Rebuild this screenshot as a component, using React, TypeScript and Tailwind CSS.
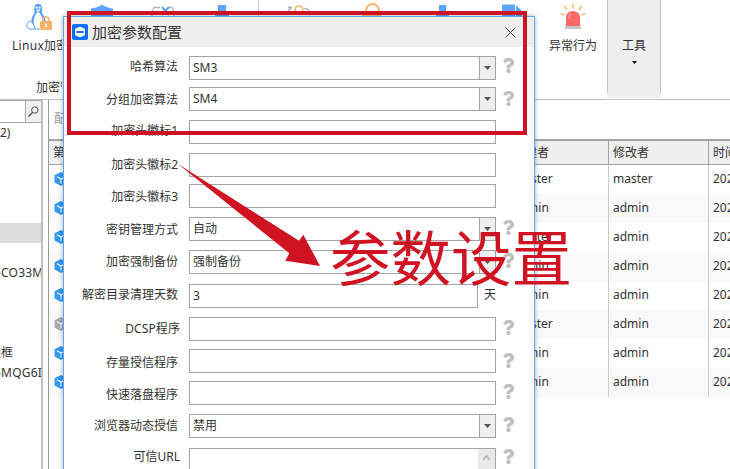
import { FaQuestion } from "react-icons/fa";

type Field = {
  label: string;
  value?: string;
  select?: boolean;
  help?: boolean;
  unit?: string;
  scroll?: boolean;
  row: string;
  text: string;
  mark?: string;
};

// row: 与上一行的间距, text: 标签的微调, mark: 问号的垂直微调
const FIELDS: Field[] = [
  { label: "哈希算法", value: "SM3", select: true, help: true, row: "mt-[9px]", text: "mt-[2px] pr-px", mark: "mt-[2px]" },
  { label: "分组加密算法", value: "SM4", select: true, help: true, row: "mt-[7px]", text: "mt-[4px] pr-px", mark: "mt-[4px]" },
  { label: "加密头徽标1", row: "mt-[9px]", text: "mt-[2px] pr-px" },
  { label: "加密头徽标2", row: "mt-[9px]", text: "mt-[3px] pr-px" },
  { label: "加密头徽标3", row: "mt-[7px]", text: "mt-[4px] pr-px" },
  { label: "密钥管理方式", value: "自动", select: true, help: true, row: "mt-[9px]", text: "mt-[4px] pr-px", mark: "mt-[3px]" },
  { label: "加密强制备份", value: "强制备份", select: true, help: true, row: "mt-[9px]", text: "mt-[3px] pr-px", mark: "mt-[3px]" },
  { label: "解密目录清理天数", value: "3", unit: "天", row: "mt-[10px]", text: "mt-[2px] pr-px" },
  { label: "DCSP程序", help: true, row: "mt-[9px]", text: "mt-[3px] -mr-px tracking-[0.1px]", mark: "mt-[3px]" },
  { label: "存量授信程序", help: true, row: "mt-[8px]", text: "mt-[5px] pr-px", mark: "mt-[4px]" },
  { label: "快速落盘程序", help: true, row: "mt-[8px]", text: "mt-[5px] pr-px", mark: "mt-[3px]" },
  { label: "浏览器动态授信", value: "禁用", select: true, help: true, row: "mt-[9px]", text: "mt-[3px] pr-px", mark: "mt-[3px]" },
  { label: "可信URL", help: true, scroll: true, row: "mt-[10px]", text: "mt-0 -mr-px", mark: "mt-px" },
];

const ROWS = [
  { creator: "master", editor: "master", active: true },
  { creator: "admin", editor: "admin", active: true },
  { creator: "master", editor: "admin", active: true },
  { creator: "admin", editor: "admin", active: true },
  { creator: "admin", editor: "admin", active: true },
  { creator: "master", editor: "admin", active: false },
  { creator: "admin", editor: "admin", active: true },
  { creator: "admin", editor: "admin", active: true },
];

function CubeIcon({ active }: { active: boolean }) {
  return (
    <svg width="14" height="14" viewBox="0 0 14 14" className="shrink-0">
      <path d="M7 0 13.5 3.3v7.2L7 14 .5 10.5V3.3Z" fill={active ? "#3399f3" : "#a9a9b1"} />
      <path d="M3 4.8 7 7l4-2.200M7 7v4.500" stroke="#fff" strokeWidth="1.100" fill="none" />
    </svg>
  );
}

function LinuxIcon() {
  return (
    <svg width="28" height="30" viewBox="0 0 28 30" className="shrink-0">
      <path d="M8.500 10C7.500 4 9 .8 12.200.8S17 4 16 10c3 4 4.500 7 3 12H6c-1.500-5 0-8 2.500-12Z" fill="#5ba4fb" />
      <path d="M12 8.500c-3 3-5 8-4 14.500h8.500c1.500-5.500-1-11.500-4.500-14.500Z" fill="#fff" />
      <path d="M3.500 17c-.5 2.500-3.500 3-2.500 7.500 1.500 1.500 5 2.500 7.500 1.500 1.500-2.500-2-5.500-5-9Z" fill="#fff" stroke="#5ba4fb" strokeWidth="1" />
      <path d="M8.500 26h6" stroke="#5ba4fb" strokeWidth="1" />
      <circle cx="10.600" cy="4.700" r="1.100" fill="#fff" />
      <circle cx="13.700" cy="4.700" r="1.100" fill="#fff" />
      <path d="m10 7.300 2.200-1 2.200 1-2.200 1.400Z" fill="#fff" />
      <path d="M17 18v-1a3 3 0 0 1 6 0v1" fill="none" stroke="#fab26b" strokeWidth="1.500" />
      <rect x="14" y="18" width="12" height="9" rx="1" fill="#fab26b" />
      <path d="M20 20.500V24" stroke="#fff" strokeWidth="1.500" />
    </svg>
  );
}

function AlarmIcon() {
  return (
    <svg width="26" height="26" viewBox="0 0 26 26">
      <path d="M13 0v4.500M4.500 2l2.500 4M21.500 2 19 6M.500 9.500l4 1.500M25.500 9.500l-4 1.500" stroke="#ffbc70" strokeWidth="1.600" />
      <path d="M6 22v-9a7 6 0 0 1 14 0v9Z" fill="#ff6868" />
      <path d="M9 15v-2q0-2 2-3" stroke="#ffc4c4" strokeWidth="1" fill="none" />
      <rect x="5" y="22" width="16" height="3" rx=".5" fill="#c4c4c4" />
    </svg>
  );
}

// 工具栏上被对话框挡住、只露出顶部的图标
function RibbonIcons() {
  return (
    <svg width="460" height="17" viewBox="0 0 460 17" className="shrink-0">
      <path d="M29 17V8.500q7-1 11-4 4 3 11 4V17Z" fill="#5ba5fb" />
      <path d="M98 7.500h-5.500q-2 0-2.500 9M106 7.500h3.500q2 0 2.500 9" stroke="#b8b8b8" strokeWidth="1.500" fill="none" />
      <path d="m100 7 7 8m0-8-7 8" stroke="#5ba5fb" strokeWidth="2" />
      <path d="M156 5h8v10h3v2h-14v-2h3Z" fill="#5ba5fb" />
      <path d="M196.500 1v16" stroke="#c9c9c9" />
      <path d="M225.500 15q.5-6 4-6.500M242 8.500q6-.5 6 7" stroke="#b8b8b8" strokeWidth="1.500" fill="none" />
      <path d="M226 7.500h4" stroke="#b8b8b8" strokeWidth="2" />
      <path d="M233 15v-5a4 4 0 0 1 8 0v5" stroke="#fbb877" strokeWidth="1.700" fill="none" />
      <path d="M304 14v-3a6.500 7 0 0 1 13 0v3M300 15.500h20" stroke="#fbb877" strokeWidth="2" fill="none" />
      <path d="M377 5h7v10h3v2h-13v-2h3Z" fill="#5ba5fb" />
      <path d="M440 5.500q0-1 1-1h12V17h-13Zm14-.5 6 6v6h-6Z" fill="#5ba5fb" />
    </svg>
  );
}

function Ribbon() {
  return (
    <div className="flex h-[100px] border-b border-[#c3c3c3]">
      <div className="flex w-[62px] shrink-0 flex-col overflow-hidden whitespace-nowrap pt-[3px]">
        <div className="pl-[26px]">
          <LinuxIcon />
        </div>
        <div className="mt-1 pl-3 leading-[18px]">
          <span className="tracking-[0.3px]">Linux</span>加密
        </div>
        <div className="mt-6 pl-9 leading-[18px]">加密管理</div>
      </div>
      <RibbonIcons />
      <div className="flex w-[85px] shrink-0 flex-col items-center whitespace-nowrap pl-[17px] pt-1">
        <AlarmIcon />
        <div className="mt-[7px] leading-[18px]">异常行为</div>
      </div>
      <div className="h-[98px] w-[54px] shrink-0 bg-[#efefef]">
        <div className="flex h-[93px] flex-col items-center border-x border-[#c3c3c3] pt-[37px]">
          <div className="leading-[18px]">工具</div>
          <svg width="5" height="3" viewBox="0 0 5 3" className="mt-[6px]">
            <path d="M0 0h5L2.500 3Z" fill="#000" />
          </svg>
        </div>
      </div>
    </div>
  );
}

function Sidebar() {
  return (
    <div className="flex w-[43px] shrink-0 flex-col overflow-hidden whitespace-nowrap border-r-2 border-[#c0c0c0]">
      <div className="flex h-[23px] shrink-0 border-y border-[#a9a9a9]">
        <div className="w-[25px]" />
        <div className="flex w-4 items-center justify-center border-l border-[#a9a9a9] bg-[#efefef]">
          <svg width="11" height="11" viewBox="0 0 11 11" fill="none" stroke="#555">
            <circle cx="6.800" cy="4" r="3.200" />
            <path d="M4.500 6.500.500 10.500" strokeWidth="1.400" />
          </svg>
        </div>
      </div>
      <div className="mt-px leading-[18px]">2)</div>
      <div className="mt-[81px] h-5 shrink-0 bg-[#dcdcdc]" />
      <div className="mt-5 -ml-[3px] leading-[20px] tracking-[0.2px]">-CO33M</div>
      <div className="mt-[61px] flex justify-start leading-[18px]">
        <span className="-ml-[11px]">边框</span>
      </div>
      <div className="mt-px -ml-[3px] leading-[20px] tracking-[0.2px]">-MQG6I</div>
    </div>
  );
}

function FileTable() {
  return (
    <div className="ml-[5px] flex-1 overflow-hidden border-l border-[#999]">
      <div className="h-[39px] pl-[5px] pt-[10px] leading-[18px] text-[#999]">配置</div>
      <div className="grid h-[26px] w-[760px] grid-cols-[460px_100px_100px_100px] border-b border-t-2 border-[#a3a3a3] bg-[#efefef] leading-[23px]">
        <div className="border-r border-[#a3a3a3] pl-1">第</div>
        <div className="border-r border-[#a3a3a3] pl-1">创建者</div>
        <div className="border-r border-[#a3a3a3] pl-1">修改者</div>
        <div className="pl-1">时间</div>
      </div>
      {ROWS.map((r, i) => (
        <div
          key={i}
          className={[
            "grid h-[29px] w-[760px] grid-cols-[460px_100px_100px_100px] leading-[28px]",
            i % 2 ? "bg-[#f9f9f9]" : "bg-white",
          ].join(" ")}
        >
          <div className="flex items-center pb-[2px] pl-[5px]">
            <CubeIcon active={r.active} />
          </div>
          <div className="border-r border-[#ccc] pl-1">{r.creator}</div>
          <div className="border-r border-[#ccc] pl-1">{r.editor}</div>
          <div className="pl-1">2024</div>
        </div>
      ))}
    </div>
  );
}

function FieldRow({ field }: { field: Field }) {
  return (
    <div className={["flex h-6 items-start", field.row].join(" ")}>
      <div className="w-[125px] shrink-0 pr-[10px]">
        <div className={["whitespace-nowrap text-right leading-[18px]", field.text].join(" ")}>{field.label}</div>
      </div>
      <div
        className={[
          "flex shrink-0 border border-[#a3a3a3] bg-white",
          field.unit ? "w-[289px]" : "w-[307px]",
          field.scroll ? "h-[60px]" : "h-6",
        ].join(" ")}
      >
        <div className="flex-1 pl-[3px] leading-[22px]">{field.value}</div>
        {field.select && (
          <div className="flex w-4 items-center justify-center border-l border-[#a3a3a3] bg-[#efefef]">
            <svg width="7" height="4" viewBox="0 0 7 4">
              <path d="M0 0h7L3.500 4Z" fill="#555" />
            </svg>
          </div>
        )}
        {field.scroll && (
          <div className="flex w-[17px] justify-center bg-[#e9e9e9] pt-[6px]">
            <svg width="9" height="6" viewBox="0 0 9 6" fill="none" stroke="#b5b5b5" strokeWidth="1.800">
              <path d="m1 5 3.500-4L8 5" />
            </svg>
          </div>
        )}
      </div>
      {field.unit && <div className="ml-[6px] mt-[2px] leading-[18px]">{field.unit}</div>}
      {field.help && (
        <FaQuestion
          className={["ml-[5px] h-[15px] w-[15px] stroke-[#bfbfbf] stroke-[16px] text-[#bfbfbf]", field.mark].join(" ")}
        />
      )}
    </div>
  );
}

function ConfigDialog() {
  return (
    <div className="absolute left-[63px] top-4 h-[480px] w-[472px] border border-[#5ba5fb] bg-white shadow-[0_0_5px_rgba(0,0,0,0.3)]">
      <div className="flex h-[30px] items-center bg-[#efefef] pl-2">
        <svg width="16" height="16" viewBox="0 0 16 16">
          <rect width="16" height="16" rx="2" fill="#0b73fb" />
          <path d="m8 2.500 5 2.500v6L8 13.500 3 11V5Z" fill="#fff" />
          <path d="M4.500 8h7" stroke="#0b73fb" strokeWidth="2" />
        </svg>
        <span className="ml-1 flex-1 text-[15px] leading-5">加密参数配置</span>
        <svg width="11" height="11" viewBox="0 0 11 11" stroke="#444" className="mr-[18px]">
          <path d="m.500.500 10 10m0-10-10 10" />
        </svg>
      </div>
      {FIELDS.map((f) => (
        <FieldRow key={f.label} field={f} />
      ))}
    </div>
  );
}

// 红色标注：框、箭头和文字
function Annotation() {
  return (
    <>
      <div className="absolute left-[67px] top-[11px] h-[124px] w-[460px] border-4 border-[#cf1322]" />
      <svg className="absolute left-[178px] top-[164px]" width="143" height="103" viewBox="0 0 143 103">
        <path d="M0 0 121 76.700 125.300 70.700 142 102 107.300 96.700 111.300 89.300Z" fill="#cf1322" />
      </svg>
      <div className="absolute left-[330px] top-[228px] whitespace-nowrap text-[60.500px] leading-[60px] text-[#cf1322]">
        参数设置
      </div>
    </>
  );
}

export default function App() {
  return (
    <div className="relative flex h-[469px] w-[730px] flex-col overflow-hidden bg-white font-['Noto_Sans','Noto_Sans_CJK_SC',sans-serif] text-[12px] text-[#333]">
      <Ribbon />
      <div className="flex min-h-0 flex-1">
        <Sidebar />
        <FileTable />
      </div>
      <ConfigDialog />
      <Annotation />
    </div>
  );
}
